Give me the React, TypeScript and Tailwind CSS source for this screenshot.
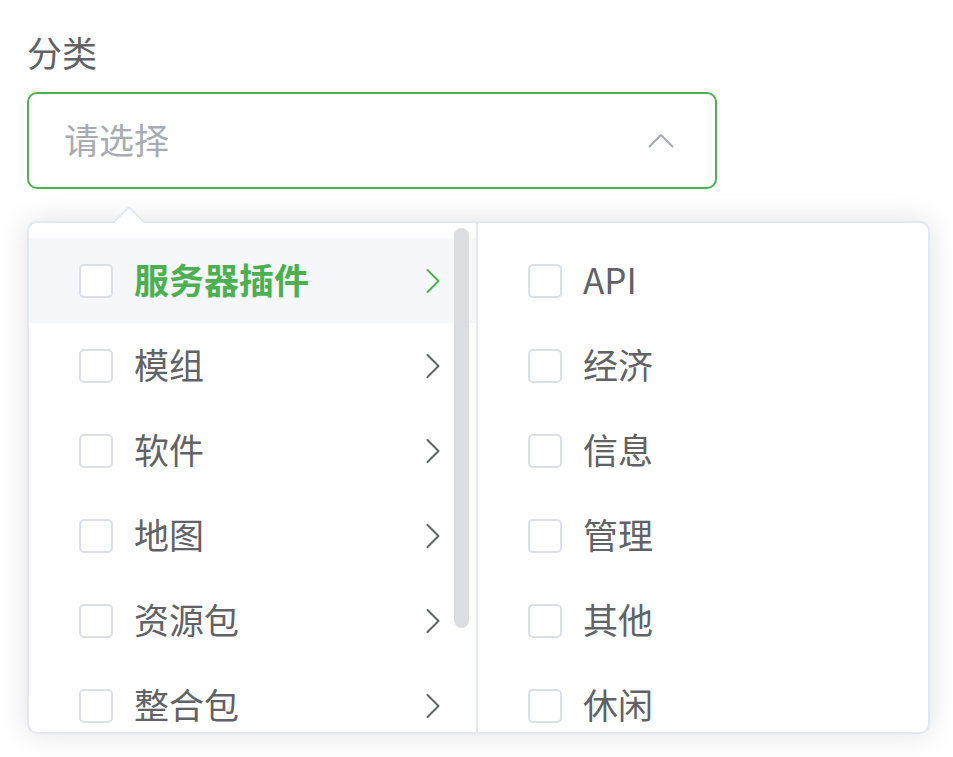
import type { ReactNode } from 'react';

const left = ['服务器插件', '模组', '软件', '地图', '资源包', '整合包'];
const right = ['API', '经济', '信息', '管理', '其他', '休闲'];

function Box() {
  return <span className="h-[34px] w-[34px] shrink-0 rounded-[5px] border-2 border-[#dcdfe6] bg-white" />;
}

function Arrow({ active }: { active?: boolean }) {
  return (
    <svg width="14" height="26" viewBox="0 0 14 26" className="ml-auto mr-[36px] shrink-0">
      <path
        d="M1.5 2 L12.5 13 L1.5 24"
        fill="none"
        stroke={active ? '#4caf50' : '#606266'}
        strokeWidth="2"
        strokeLinecap="round"
        strokeLinejoin="round"
      />
    </svg>
  );
}

function Row({ children, active, arrow }: { children: ReactNode; active?: boolean; arrow?: boolean }) {
  return (
    <div className={`flex h-[85px] shrink-0 items-center pl-[50px] ${active ? 'bg-[#f5f7fa]' : ''}`}>
      <Box />
      <span
        className={`ml-[21px] -translate-y-[2px] text-[35px] leading-none ${active ? 'font-bold text-[#4caf50]' : 'text-[#606266]'}`}
      >
        {children}
      </span>
      {arrow && <Arrow active={active} />}
    </div>
  );
}

export default function App() {
  return (
    <div
      className="min-h-[757px] bg-white pl-[27px] pt-[13px]"
      style={{ fontFamily: '"Noto Sans CJK SC", "Noto Sans", sans-serif' }}
    >
      <div className="h-[79px] text-[35px] leading-[77px] text-[#606266]">分类</div>

      <div className="flex h-[97px] w-[690px] items-center rounded-[10px] border-2 border-[#4caf50] pl-[35px]">
        <span className="-translate-y-[2px] text-[35px] leading-none text-[#a8abb2]">请选择</span>
        <svg width="26" height="15" viewBox="0 0 26 15" className="ml-auto mr-[41px]">
          <path d="M1.5 13.5 L13 2 L24.5 13.5" fill="none" stroke="#a8abb2" strokeWidth="2" strokeLinecap="round" strokeLinejoin="round" />
        </svg>
      </div>

      <div className="relative mt-[32px] flex h-[513px] w-[903px] rounded-[10px] border-2 border-[#e4e7ed] bg-white shadow-[0_0_30px_rgba(0,0,0,0.12)]">
        <span className="absolute left-[89px] top-[-13px] z-10 h-[22px] w-[22px] rotate-45 rounded-tl-[3px] border-l-2 border-t-2 border-[#e4e7ed] bg-white" />

        <div className="relative flex h-full w-[449px] flex-col overflow-hidden rounded-l-[8px] border-r-2 border-[#e4e7ed] pt-[15px]">
          {left.map((t, i) => (
            <Row key={t} active={i === 0} arrow>
              {t}
            </Row>
          ))}
          <span className="absolute right-[7px] top-[5px] h-[400px] w-[15px] rounded-full bg-[#dcdde0]" />
        </div>

        <div className="flex h-full w-[448px] flex-col overflow-hidden rounded-r-[8px] pt-[15px]">
          {right.map((t) => (
            <Row key={t}>{t}</Row>
          ))}
        </div>
      </div>
    </div>
  );
}
